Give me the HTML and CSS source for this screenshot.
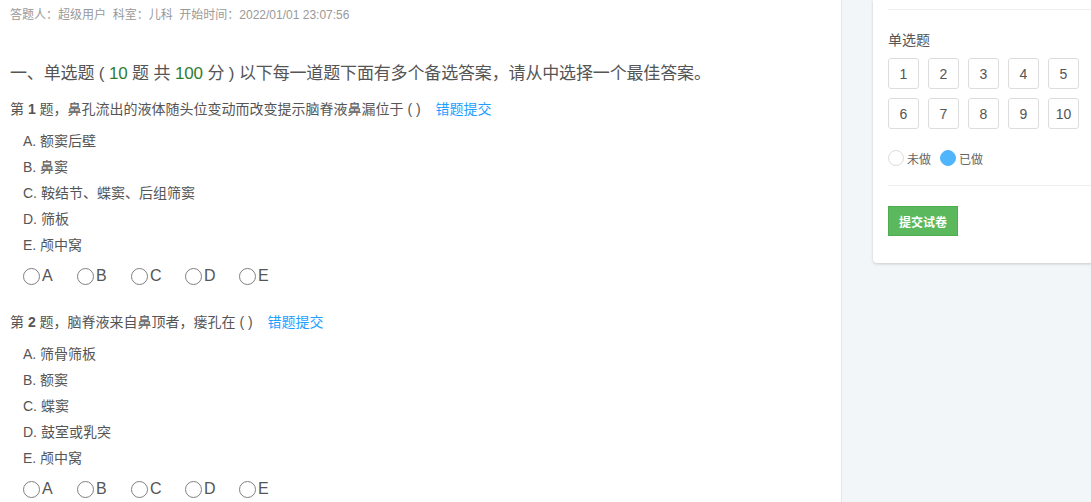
FILE: index.html
```html
<!DOCTYPE html>
<html lang="zh-CN">
<head>
  <meta charset="UTF-8" />
  <title>在线考试</title>
  <link rel="stylesheet" href="styles.css">
</head>
<body>
<div class="page">
  <div class="main">
    <div class="info">答题人：超级用户&nbsp; 科室：儿科&nbsp; 开始时间：2022/01/01 23:07:56</div>

    <h1 class="part">一、单选题 ( <span class="num">10</span> 题 共 <span class="num">100</span> 分 ) 以下每一道题下面有多个备选答案，请从中选择一个最佳答案。</h1>

    <div class="question">
      <div class="q-title">第 <b>1</b> 题，鼻孔流出的液体随头位变动而改变提示脑脊液鼻漏位于 ( ) <a class="report" href="#">错题提交</a></div>
      <div class="opt">A. 额窦后壁</div>
      <div class="opt">B. 鼻窦</div>
      <div class="opt">C. 鞍结节、蝶窦、后组筛窦</div>
      <div class="opt">D. 筛板</div>
      <div class="opt">E. 颅中窝</div>
      <div class="choices">
        <label class="choice"><span class="circle"></span>A</label>
        <label class="choice"><span class="circle"></span>B</label>
        <label class="choice"><span class="circle"></span>C</label>
        <label class="choice"><span class="circle"></span>D</label>
        <label class="choice"><span class="circle"></span>E</label>
      </div>
    </div>

    <div class="question">
      <div class="q-title">第 <b>2</b> 题，脑脊液来自鼻顶者，瘘孔在 ( ) <a class="report" href="#">错题提交</a></div>
      <div class="opt">A. 筛骨筛板</div>
      <div class="opt">B. 额窦</div>
      <div class="opt">C. 蝶窦</div>
      <div class="opt">D. 鼓室或乳突</div>
      <div class="opt">E. 颅中窝</div>
      <div class="choices">
        <label class="choice"><span class="circle"></span>A</label>
        <label class="choice"><span class="circle"></span>B</label>
        <label class="choice"><span class="circle"></span>C</label>
        <label class="choice"><span class="circle"></span>D</label>
        <label class="choice"><span class="circle"></span>E</label>
      </div>
    </div>
  </div>

  <div class="side">
    <div class="card">
      <div class="card-top"></div>
      <div class="card-body">
        <div class="group-name">单选题</div>
        <div class="nums">
          <span class="n">1</span><span class="n">2</span><span class="n">3</span><span class="n">4</span><span class="n">5</span>
          <span class="n">6</span><span class="n">7</span><span class="n">8</span><span class="n">9</span><span class="n">10</span>
        </div>
        <div class="legend">
          <span class="dot"></span>未做
          <span class="dot done"></span>已做
        </div>
      </div>
      <div class="card-foot">
        <button class="submit">提交试卷</button>
      </div>
    </div>
  </div>
</div>
</body>
</html>
```

FILE: styles.css
```css
body { margin: 0; font-family: "Liberation Sans", "Noto Sans CJK SC", sans-serif; color: #555; background: #fff; overflow: hidden; }
.page { display: flex; height: 502px; }

.main { width: 831px; padding: 5px 0 0 10px; border-right: 1px solid #e6e6e6; flex-shrink: 0; }
.info { font-size: 12px; line-height: 20px; color: #999; }
.part { font-size: 17px; font-weight: normal; line-height: 24px; margin: 37px 0 13px; color: #555; letter-spacing: -0.15px; }
.part .num { color: #2e7d32; }

.question { margin-bottom: 26px; }
.q-title { font-size: 14px; line-height: 20px; margin-bottom: 9px; }
.q-title b { font-weight: bold; }
.report { color: #1e9fff; text-decoration: none; margin-left: 11px; }
.opt { font-size: 14px; line-height: 26px; padding-left: 13px; }
.choices { display: flex; padding-left: 13px; margin-top: 8px; height: 20px; align-items: center; }
.choice { display: flex; align-items: center; width: 54px; font-size: 16px; color: #555; }
.circle { width: 15px; height: 15px; border: 1px solid #808080; border-radius: 50%; margin-right: 2px; }

.side { flex: 1; background: #f3f6f9; padding-left: 31px; }
.card { background: #fff; margin-right: -20px; border-radius: 0 0 4px 4px; box-shadow: 0 1px 3px rgba(0,0,0,0.18); padding: 0 15px 27px; }
.card-top { height: 9px; border-bottom: 1px solid #eee; }
.card-body { padding-top: 20px; border-bottom: 1px solid #eee; padding-bottom: 19px; }
.group-name { font-size: 14px; line-height: 20px; margin-bottom: 8px; }
.nums { display: grid; grid-template-columns: repeat(5, 31px); gap: 9px; }
.n { height: 29px; border: 1px solid #ddd; border-radius: 3px; display: flex; align-items: center; justify-content: center; font-size: 14px; color: #555; }
.legend { display: flex; align-items: center; margin-top: 21px; font-size: 12px; color: #666; height: 16px; }
.dot { width: 14px; height: 14px; border: 1px solid #ddd; border-radius: 50%; margin-right: 3px; }
.dot.done { background: #4fb6fd; border-color: #4fb6fd; margin-left: 9px; }
.card-foot { padding-top: 20px; }
.submit { width: 70px; height: 30px; background: #5cb85c; border: 1px solid #4cae4c; color: #fff; font-size: 12px; font-weight: bold; font-family: inherit; padding: 0; }
```
